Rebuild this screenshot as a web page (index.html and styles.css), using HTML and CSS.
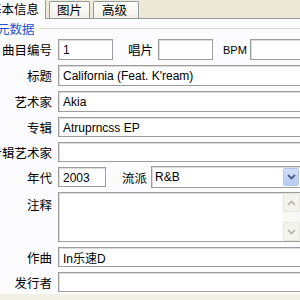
FILE: index.html
```html
<!DOCTYPE html>
<html lang="zh">
<head>
    <meta charset="UTF-8">
    <title>歌曲信息</title>
    <link rel="stylesheet" href="styles.css">
</head>
<body>
    <div class="tabs">
        <div class="tab active">基本信息</div>
        <div class="tab">图片</div>
        <div class="tab wide">高级</div>
    </div>

    <div class="panel">
        <div class="group-title">
            <span>元数据</span>
            <div class="group-line"></div>
        </div>

        <div class="rows">
            <div class="row tall">
                <label class="label">曲目编号</label>
                <input class="field track" type="text" value="1">
                <span class="inline-label disc-label">唱片</span>
                <input class="field disc" type="text" value="">
                <span class="inline-label bpm-label">BPM</span>
                <input class="field grow" type="text" value="">
            </div>
            <div class="row tall">
                <label class="label">标题</label>
                <input class="field grow" type="text" value="California (Feat. K'ream)">
            </div>
            <div class="row tall">
                <label class="label">艺术家</label>
                <input class="field grow" type="text" value="Akia">
            </div>
            <div class="row">
                <label class="label">专辑</label>
                <input class="field grow" type="text" value="Atruprncss EP">
            </div>
            <div class="row">
                <label class="label">专辑艺术家</label>
                <input class="field grow" type="text" value="">
            </div>
            <div class="row">
                <label class="label">年代</label>
                <input class="field year" type="text" value="2003">
                <span class="inline-label genre-label">流派</span>
                <div class="select">
                    <span class="select-value">R&amp;B</span>
                    <div class="select-btn">
                        <svg width="9" height="6" viewBox="0 0 9 6"><path d="M1 1 L4.5 4.5 L8 1" fill="none" stroke="#4a5f8c" stroke-width="1.8"/></svg>
                    </div>
                </div>
            </div>
            <div class="row notes-row">
                <label class="label">注释</label>
                <div class="textarea">
                    <div class="scrollbar">
                        <div class="sb-btn">
                            <svg width="9" height="6" viewBox="0 0 9 6"><path d="M1 5 L4.5 1.5 L8 5" fill="none" stroke="#b4b4ac" stroke-width="1.6"/></svg>
                        </div>
                        <div class="sb-track"></div>
                        <div class="sb-btn">
                            <svg width="9" height="6" viewBox="0 0 9 6"><path d="M1 1 L4.5 4.5 L8 1" fill="none" stroke="#b4b4ac" stroke-width="1.6"/></svg>
                        </div>
                    </div>
                </div>
            </div>
            <div class="row">
                <label class="label">作曲</label>
                <input class="field grow" type="text" value="In乐速D">
            </div>
            <div class="row">
                <label class="label">发行者</label>
                <input class="field grow" type="text" value="">
            </div>
        </div>
    </div>
    <div class="footer"></div>
</body>
</html>
```

FILE: styles.css
```css
html, body {
    margin: 0;
    padding: 0;
    overflow: hidden;
}
body {
    width: 302px;
    height: 300px;
    background-color: #fcfcfe;
    font-family: "Noto Sans CJK SC", sans-serif;
    font-size: 12px;
    color: #000;
}
.tabs {
    display: flex;
    align-items: flex-end;
    height: 19px;
    background-color: #ece9d8;
    border-bottom: 1px solid #919b9c;
    box-sizing: border-box;
}
.tab {
    height: 16px;
    line-height: 16px;
    margin-left: 3px;
    padding: 0 7px;
    border: 1px solid #919b9c;
    border-bottom: none;
    border-radius: 2px 2px 0 0;
    background: linear-gradient(#ffffff, #f1efe6);
    font-size: 12.5px;
}
.tab.wide {
    padding: 0 11px 0 8px;
}
.tab.active {
    height: 19px;
    line-height: 18px;
    margin-left: -18px;
    margin-bottom: -1px;
    padding: 0 6px;
    background: #fcfcfe;
    border-top: none;
}
.panel {
    padding-top: 2px;
}
.group-title {
    display: flex;
    align-items: center;
    height: 15px;
    margin-left: -3px;
    color: #1d55d0;
    font-size: 12.5px;
}
.group-line {
    flex: 1;
    height: 1px;
    margin-left: 5px;
    background-color: #d6d5c8;
}
.rows {
    display: flex;
    flex-direction: column;
    gap: 5px;
    margin-top: 3px;
}
.row {
    display: flex;
    align-items: center;
    height: 20px;
}
.row.tall {
    height: 21px;
}
.label {
    display: flex;
    justify-content: flex-end;
    flex: none;
    width: 52px;
    margin-right: 6px;
    white-space: nowrap;
    font-size: 12.5px;
}
.field {
    height: 100%;
    box-sizing: border-box;
    margin: 0;
    padding: 1px 4px 0;
    border: 1px solid #9d9d9d;
    box-shadow: inset 1px 1px 0 #dcdcdc;
    background: #fff;
    font-family: "Liberation Sans", "Noto Sans CJK SC", sans-serif;
    font-size: 12px;
    color: #000;
    outline: none;
}
.grow {
    flex: 1;
    min-width: 0;
}
.track {
    width: 55px;
}
.disc {
    width: 55px;
}
.year {
    width: 48px;
}
.inline-label {
    white-space: nowrap;
    font-size: 12.5px;
}
.disc-label {
    margin: 0 5px 0 15px;
}
.bpm-label {
    margin: 0 3px 0 10px;
    font-family: "Liberation Sans", sans-serif;
    font-size: 11px;
}
.genre-label {
    margin: 0 4px 0 16px;
}
.select {
    flex: 1;
    display: flex;
    align-items: center;
    height: 22px;
    box-sizing: border-box;
    border: 1px solid #9d9d9d;
    box-shadow: inset 1px 1px 0 #dcdcdc;
    background: #fff;
    font-family: "Liberation Sans", sans-serif;
    font-size: 12px;
}
.select-value {
    flex: 1;
    padding-left: 3px;
}
.select-btn {
    display: flex;
    align-items: center;
    justify-content: center;
    width: 16px;
    height: 18px;
    margin-right: 2px;
    background: linear-gradient(#d2defc, #b8cbf6);
    border: 1px solid #b4c6ee;
    border-radius: 2px;
    box-sizing: border-box;
}
.notes-row {
    height: 50px;
    align-items: flex-start;
}
.notes-row .label {
    margin-top: 3px;
}
.textarea {
    flex: 1;
    display: flex;
    justify-content: flex-end;
    height: 100%;
    box-sizing: border-box;
    border: 1px solid #9d9d9d;
    box-shadow: inset 1px 1px 0 #dcdcdc;
    background: #fff;
}
.scrollbar {
    display: flex;
    flex-direction: column;
    width: 17px;
    margin-right: 1px;
    background: #f8f8f5;
}
.sb-btn {
    display: flex;
    align-items: center;
    justify-content: center;
    height: 17px;
    background: #f4f4ef;
    border: 1px solid #e6e6de;
    border-radius: 2px;
}
.sb-track {
    flex: 1;
}
.footer {
    margin-top: 2px;
    height: 10px;
    background: #f2f0e6;
}
```
